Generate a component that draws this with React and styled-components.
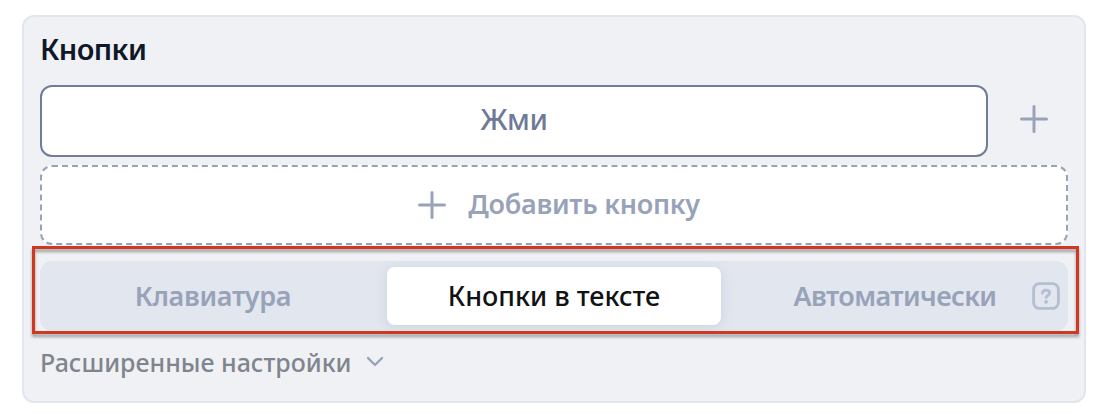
import React, {useState} from 'react';
import styled, {createGlobalStyle} from 'styled-components';

const GlobalStyle = createGlobalStyle`
  body {
    margin: 0;
    background: #fff;
    font-family: 'Noto Sans', 'Open Sans', sans-serif;
  }

  button {
    margin: 0;
    padding: 0;
    border: 0;
    background: none;
    font: inherit;
    cursor: pointer;
  }
`;

const Page = styled.main`
  box-sizing: border-box;
  height: 414px;
  padding: 15px 12px 11px 22px;
`;

const Panel = styled.section`
  box-sizing: border-box;
  display: flex;
  flex-direction: column;
  height: 388px;
  padding: 16px;
  border: 2px solid #e1e6ee;
  border-radius: 12px;
  background: #f0f1f5;
`;

const Title = styled.h2`
  margin: 0 0 16px;
  height: 36px;
  line-height: 32px;
  font-size: 29px;
  font-weight: 600;
  color: #101828;
`;

const ButtonRow = styled.div`
  display: flex;
  height: 72px;
  margin-bottom: 8px;
`;

const KeyButton = styled.button`
  && {
    flex: 1;
    padding-bottom: 5px;
    border: 2px solid #6f7d99;
    border-radius: 12px;
    background: #fff;
    font-size: 29px;
    font-weight: 500;
    color: #6f7a99;
  }
`;

const IconButton = styled.button`
  && {
    display: flex;
    align-items: center;
    justify-content: center;
    width: 80px;
    padding: 0 0 4px 12px;
    box-sizing: border-box;
  }
`;

const AddButton = styled.button`
  && {
    display: flex;
    align-items: center;
    justify-content: center;
    gap: 22px;
    flex: none;
    box-sizing: border-box;
    height: 80px;
    margin-bottom: 16px;
    padding-left: 10px;
    border: 2px dashed #98a2b8;
    border-radius: 12px;
    background: #fff;
    font-size: 27px;
    font-weight: 600;
    color: #98a2b8;
  }
`;

const AddLabel = styled.span`
  padding-bottom: 3px;
  letter-spacing: -0.27px;
`;

const TabsFrame = styled.div`
  position: relative;
  margin-bottom: 14px;

  &::after {
    content: '';
    position: absolute;
    inset: -15px -11px -3px -8px;
    border: 3px solid #d03820;
    filter: drop-shadow(0 3px 1.5px rgba(0, 0, 0, 0.35));
    pointer-events: none;
  }
`;

const Tabs = styled.div`
  display: grid;
  grid-template-columns: repeat(3, 1fr);
  gap: 7px;
  box-sizing: border-box;
  height: 70px;
  padding: 6px;
  border-radius: 12px;
  background: #e1e6ef;
`;

const Tab = styled.button`
  && {
    position: relative;
    padding-bottom: 2px;
    border-radius: 8px;
    font-size: 27px;
    font-weight: ${({$active}) => ($active ? 500 : 600)};
    color: ${({$active}) => ($active ? '#101214' : '#98a2b8')};
    background: ${({$active}) => ($active ? '#fff' : 'transparent')};
    box-shadow: ${({$active}) =>
      $active ? '0 2px 12px rgba(152, 162, 184, 0.25)' : 'none'};
    letter-spacing: ${({$spacing}) => $spacing}px;
  }
`;

const TabHint = styled.span`
  position: absolute;
  right: 2px;
  top: 15px;
  display: flex;
`;

const Advanced = styled.button`
  && {
    display: flex;
    align-items: center;
    align-self: flex-start;
    gap: 14px;
    height: 34px;
    font-size: 25px;
    font-weight: 500;
    color: #80858d;
  }
`;

const Label = styled.span`
  letter-spacing: ${({$spacing}) => $spacing || 0}px;
`;

function PlusIcon() {
  return (
    <svg width="28" height="28" viewBox="0 0 28 28" fill="none">
      <path
        d="M14 1.5v25M1.5 14h25"
        stroke="#98a2b8"
        strokeWidth="3"
        strokeLinecap="round"
      />
    </svg>
  );
}

function HintIcon() {
  return (
    <svg width="28" height="28" viewBox="0 0 28 28" fill="none">
      <rect
        x="1.6"
        y="1.6"
        width="24.8"
        height="24.8"
        rx="6"
        stroke="#b4bfd1"
        strokeWidth="2.8"
      />
      <path
        d="M10.4 11.2c.2-1.9 1.6-3 3.6-3 2.1 0 3.6 1.1 3.6 2.9 0 2.4-3.4 2.4-3.4 4.5"
        stroke="#b4bfd1"
        strokeWidth="2.9"
        strokeLinecap="round"
        strokeLinejoin="round"
      />
      <circle cx="14.1" cy="19.8" r="1.9" fill="#b4bfd1" />
    </svg>
  );
}

function ChevronIcon() {
  return (
    <svg width="18" height="12" viewBox="0 0 18 12" fill="none">
      <path
        d="M2 2l7 7 7-7"
        stroke="#98a2b8"
        strokeWidth="2.4"
        strokeLinecap="round"
        strokeLinejoin="round"
      />
    </svg>
  );
}

const TABS = [
  {id: 'keyboard', label: 'Клавиатура', spacing: -0.3},
  {id: 'inline', label: 'Кнопки в тексте', spacing: 0},
  {id: 'auto', label: 'Автоматически', spacing: -0.6, hint: true},
];

export default function App() {
  const [activeTab, setActiveTab] = useState('inline');

  return (
    <Page>
      <GlobalStyle />
      <Panel>
        <Title>
          <Label $spacing={-0.6}>Кнопки</Label>
        </Title>
        <ButtonRow>
          <KeyButton>
            <Label $spacing={-0.4}>Жми</Label>
          </KeyButton>
          <IconButton aria-label="Добавить">
            <PlusIcon />
          </IconButton>
        </ButtonRow>
        <AddButton>
          <PlusIcon />
          <AddLabel>Добавить кнопку</AddLabel>
        </AddButton>
        <TabsFrame>
          <Tabs>
            {TABS.map(({id, label, spacing, hint}) => (
              <Tab
                key={id}
                $active={id === activeTab}
                $spacing={spacing}
                onClick={() => setActiveTab(id)}
              >
                {label}
                {hint && (
                  <TabHint>
                    <HintIcon />
                  </TabHint>
                )}
              </Tab>
            ))}
          </Tabs>
        </TabsFrame>
        <Advanced>
          <Label>Расширенные настройки</Label>
          <ChevronIcon />
        </Advanced>
      </Panel>
    </Page>
  );
}
